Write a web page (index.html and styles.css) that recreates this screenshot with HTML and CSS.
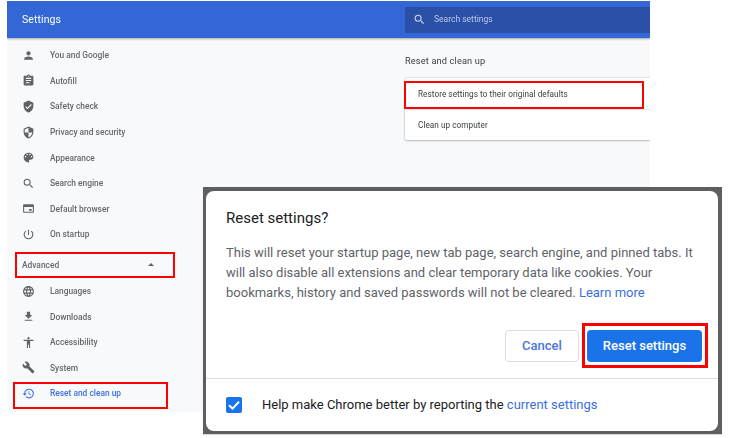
FILE: index.html
```html
<!DOCTYPE html>
<html lang="en">
<head>
<meta charset="utf-8">
<title>Reset settings</title>
<link rel="stylesheet" href="styles.css">
</head>
<body>
<div class="stage">
  <div class="app">
    <header class="topbar">
      <div class="brand">Settings</div>
      <div class="search">
        <svg class="search-icon" viewBox="0 0 24 24"><path d="M15.5 14h-.79l-.28-.27A6.47 6.47 0 0 0 16 9.5 6.5 6.5 0 1 0 9.5 16c1.61 0 3.09-.59 4.23-1.57l.27.28v.79l5 4.99L20.49 19l-4.99-5zm-6 0C7.01 14 5 11.99 5 9.5S7.01 5 9.5 5 14 7.01 14 9.5 11.99 14 9.5 14z"/></svg>
        <span>Search settings</span>
      </div>
    </header>
    <div class="content">
      <nav class="sidebar">
        <a class="item"><svg viewBox="0 0 24 24"><path d="M12 12c2.2 0 4-1.8 4-4s-1.800-4-4-4-4 1.800-4 4 1.800 4 4 4zm0 2c-2.700 0-8 1.300-8 4v2h16v-2c0-2.700-5.300-4-8-4z"/></svg><span>You and Google</span></a>
        <a class="item"><svg viewBox="0 0 24 24"><path d="M19 3h-4.180C14.400 1.840 13.300 1 12 1s-2.400.84-2.820 2H5c-1.100 0-2 .9-2 2v14c0 1.100.9 2 2 2h14c1.100 0 2-.9 2-2V5c0-1.100-.9-2-2-2zm-7 0c.55 0 1 .45 1 1s-.45 1-1 1-1-.45-1-1 .45-1 1-1zm2 14H7v-2h7v2zm3-4H7v-2h10v2zm0-4H7V7h10v2z"/></svg><span>Autofill</span></a>
        <a class="item"><svg viewBox="0 0 24 24"><path d="M12 1 3 5v6c0 5.550 3.840 10.740 9 12 5.160-1.260 9-6.450 9-12V5l-9-4zm-2 16-4-4 1.410-1.410L10 14.170l6.590-6.590L18 9l-8 8z"/></svg><span>Safety check</span></a>
        <a class="item"><svg viewBox="0 0 24 24"><path d="M12 1 3 5v6c0 5.550 3.840 10.740 9 12 5.160-1.260 9-6.450 9-12V5l-9-4zm0 10.990h7c-.53 4.120-3.280 7.790-7 8.940V12H5V6.300l7-3.110v8.800z"/></svg><span>Privacy and security</span></a>
        <a class="item"><svg viewBox="0 0 24 24"><path d="M12 3a9 9 0 0 0 0 18c.83 0 1.500-.67 1.500-1.500 0-.39-.15-.74-.39-1.010-.23-.26-.38-.61-.38-.99 0-.83.67-1.500 1.500-1.500H16c2.760 0 5-2.240 5-5 0-4.420-4.030-8-9-8zm-5.500 9a1.500 1.500 0 1 1 0-3 1.500 1.500 0 0 1 0 3zm3-4a1.500 1.500 0 1 1 0-3 1.500 1.500 0 0 1 0 3zm5 0a1.500 1.500 0 1 1 0-3 1.500 1.500 0 0 1 0 3zm3 4a1.500 1.500 0 1 1 0-3 1.500 1.500 0 0 1 0 3z"/></svg><span>Appearance</span></a>
        <a class="item"><svg viewBox="0 0 24 24"><path d="M15.500 14h-.79l-.28-.27A6.470 6.470 0 0 0 16 9.500 6.500 6.500 0 1 0 9.500 16c1.610 0 3.090-.59 4.230-1.570l.27.28v.79l5 4.990L20.490 19l-4.990-5zm-6 0C7.010 14 5 11.990 5 9.500S7.010 5 9.500 5 14 7.010 14 9.500 11.990 14 9.500 14z"/></svg><span>Search engine</span></a>
        <a class="item"><svg viewBox="0 0 24 24"><path d="M20 4H4c-1.100 0-2 .9-2 2v12c0 1.100.9 2 2 2h16c1.100 0 2-.9 2-2V6c0-1.100-.9-2-2-2zm0 14H4V9h16v9zm-2-5h-5v3h5v-3z"/></svg><span>Default browser</span></a>
        <a class="item"><svg viewBox="0 0 24 24"><path d="M13 3h-2v10h2V3zm4.830 2.170-1.420 1.420A6.920 6.920 0 0 1 19 12c0 3.870-3.130 7-7 7s-7-3.130-7-7c0-2.190 1.010-4.140 2.580-5.420L6.170 5.170A8.960 8.960 0 0 0 3 12a9 9 0 0 0 18 0c0-2.740-1.230-5.190-3.170-6.830z"/></svg><span>On startup</span></a>
        <div class="advanced"><span>Advanced</span><i class="caret"></i></div>
        <a class="item"><svg viewBox="0 0 24 24"><path d="M12 2C6.480 2 2 6.480 2 12s4.480 10 10 10 10-4.480 10-10S17.520 2 12 2zm6.930 6h-2.950a15.650 15.650 0 0 0-1.380-3.560A8.030 8.030 0 0 1 18.930 8zM12 4.040c.83 1.200 1.480 2.530 1.910 3.960h-3.820c.43-1.430 1.080-2.760 1.910-3.960zM4.260 14C4.100 13.360 4 12.690 4 12s.1-1.360.26-2h3.380c-.08.66-.14 1.320-.14 2s.06 1.340.14 2H4.260zm.82 2h2.950c.32 1.250.78 2.450 1.380 3.560A7.990 7.990 0 0 1 5.080 16zm2.950-8H5.080a7.990 7.990 0 0 1 4.330-3.560A15.650 15.650 0 0 0 8.030 8zM12 19.960c-.83-1.200-1.480-2.530-1.910-3.960h3.820c-.43 1.430-1.080 2.760-1.910 3.960zM14.340 14H9.660c-.09-.66-.16-1.320-.16-2s.07-1.350.16-2h4.680c.09.65.16 1.320.16 2s-.07 1.340-.16 2zm.25 5.560c.6-1.110 1.060-2.310 1.380-3.560h2.950a8.030 8.030 0 0 1-4.330 3.560zM16.360 14c.08-.66.14-1.320.14-2s-.06-1.340-.14-2h3.380c.16.64.26 1.310.26 2s-.1 1.360-.26 2h-3.380z"/></svg><span>Languages</span></a>
        <a class="item"><svg viewBox="0 0 24 24"><path d="M19 9h-4V3H9v6H5l7 7 7-7zM5 18v2h14v-2H5z"/></svg><span>Downloads</span></a>
        <a class="item"><svg viewBox="0 0 24 24"><path d="M12 2c1.100 0 2 .9 2 2s-.9 2-2 2-2-.9-2-2 .9-2 2-2zm9 7h-6v13h-2v-6h-2v6H9V9H3V7h18v2z"/></svg><span>Accessibility</span></a>
        <a class="item"><svg viewBox="0 0 24 24"><path d="M22.700 19l-9.100-9.100c.9-2.300.4-5-1.500-6.900-2-2-5-2.400-7.400-1.300L9 6 6 9 1.600 4.700C.4 7.100.9 10.100 2.900 12.100c1.900 1.900 4.600 2.400 6.900 1.500l9.100 9.100c.4.4 1 .4 1.400 0l2.300-2.300c.5-.4.5-1.100.1-1.400z"/></svg><span>System</span></a>
        <a class="item active"><svg viewBox="0 0 24 24"><path d="M13 3a9 9 0 0 0-9 9H1l3.890 3.890.07.14L9 12H6c0-3.870 3.130-7 7-7s7 3.130 7 7-3.130 7-7 7c-1.930 0-3.680-.79-4.940-2.060l-1.420 1.420A8.954 8.954 0 0 0 13 21a9 9 0 0 0 0-18zm-1 5v5l4.280 2.540.72-1.210-3.500-2.080V8H12z"/></svg><span>Reset and clean up</span></a>
      </nav>
      <main class="main">
        <h2 class="section-title">Reset and clean up</h2>
        <div class="card">
          <div class="row">Restore settings to their original defaults</div>
          <div class="row row-split">Clean up computer</div>
        </div>
      </main>
    </div>
  </div>

  <div class="mark mark-advanced"></div>
  <div class="mark mark-reset"></div>
  <div class="mark mark-restore"></div>

  <section class="dialog">
    <div class="dialog-inner">
      <h1 class="dialog-title">Reset settings?</h1>
      <p class="dialog-body">This will reset your startup page, new tab page, search engine, and pinned tabs. It will also disable all extensions and clear temporary data like cookies. Your bookmarks, history and saved passwords will not be cleared. <a class="link">Learn more</a></p>
      <div class="actions">
        <button class="btn btn-cancel">Cancel</button>
        <button class="btn btn-primary">Reset settings</button>
      </div>
      <div class="footer">
        <span class="check"><svg viewBox="0 0 16 16"><path d="M3 8.300 6.500 11.600 13 4.800" fill="none" stroke="#fff" stroke-width="2"/></svg></span>
        <span class="footer-text">Help make Chrome better by reporting the <a class="link">current settings</a></span>
      </div>
    </div>
    <div class="mark mark-button"></div>
  </section>
</div>
</body>
</html>
```
FILE: styles.css
```css
* { box-sizing: border-box; }
html, body { margin: 0; padding: 0; background: #fff; }
body { width: 732px; height: 438px; overflow: hidden; font-family: Roboto, "Liberation Sans", sans-serif; }
.stage { position: relative; width: 732px; height: 438px; padding: 1px 0 0 7px; }

.app { width: 643px; height: 411px; background: #f8f9fa; filter: blur(0.35px); overflow: hidden; }
.topbar { height: 37px; background: #3367d6; display: flex; align-items: center; padding-left: 15px; box-shadow: 0 1px 2px rgba(60,64,67,.45); position: relative; }
.brand { width: 383px; color: #fff; font-size: 10.5px; letter-spacing: .1px; }
.search { flex: 1; height: 26px; background: #2a50a8; border-radius: 1px 0 0 1px; display: flex; align-items: center; padding: 0 0 1px 8px; color: #b9c8ea; font-size: 8.500px; }
.search-icon { width: 13px; height: 13px; fill: #c9d5f0; margin-right: 8px; }

.content { display: flex; height: 374px; }
.sidebar { width: 398px; padding-top: 4.500px; display: flex; flex-direction: column; }
.item { display: flex; align-items: center; height: 25.600px; flex: none; padding-left: 15px; color: #64686d; font-size: 8.400px; font-weight: 500; }
.item svg { width: 13px; height: 13px; fill: #5f6368; margin-right: 15px; flex: none; }
.active, .active span { color: #3b6fe0; }
.active svg { fill: #3b6fe0; }
.advanced { height: 31px; flex: none; padding: 4px 0 0 15px; display: flex; align-items: center; color: #64686d; font-size: 8.400px; font-weight: 500; }
.advanced span { width: 126px; }
.caret { width: 0; height: 0; border-left: 3px solid transparent; border-right: 3px solid transparent; border-bottom: 3px solid #5f6368; }

.main { flex: 1; padding-top: 17px; }
.section-title { margin: 0 0 11px; font-size: 9.200px; line-height: 12px; font-weight: 400; color: #3c4043; letter-spacing: .16px; }
.card { background: #fff; height: 62px; border-radius: 2px 0 0 2px; box-shadow: 0 0 2px rgba(60,64,67,.35), 0 1px 2px rgba(60,64,67,.25); }
.row { height: 31px; padding-left: 13px; display: flex; align-items: center; font-size: 8.200px; font-weight: 400; color: #3c4043; letter-spacing: .05px; }
.row-split { border-top: 1px solid #e6e7e9; }

.mark { position: absolute; border: 2px solid #f00; }
.mark-advanced { left: 15px; top: 252px; width: 160px; height: 26px; }
.mark-reset { left: 13px; top: 382px; width: 155px; height: 27px; }
.mark-restore { left: 404px; top: 81px; width: 240px; height: 28px; }
.mark-button { left: 379px; top: 136px; width: 126px; height: 45px; border-width: 3px; }

.dialog { position: absolute; left: 203px; top: 187px; width: 519px; height: 247px; background: #5f5f5f; padding: 4px 4px 3px 3px; box-shadow: 0 1px 1px rgba(0,0,0,.15); }
.dialog-inner { height: 100%; background: #fff; border-radius: 8px; display: flex; flex-direction: column; padding-top: 17px; }
.dialog-title { margin: 0 0 0 20px; font-size: 15px; line-height: 20px; font-weight: 400; color: #202124; }
.dialog-body { margin: 15px 20px 0; font-size: 13px; line-height: 20px; color: #5f6368; height: 60px; }
.link { color: #3c6fdc; }
.actions { display: flex; justify-content: flex-end; gap: 8px; padding-right: 16px; margin-top: 27px; }
.btn { height: 32px; border-radius: 4px; font-family: inherit; font-size: 13px; font-weight: 500; padding: 0 0 2px; }
.btn-cancel { width: 74px; background: #fff; border: 1px solid #dadce0; color: #4a74e0; }
.btn-primary { width: 115px; background: #1a73e8; border: 0; color: #fff; }
.footer { margin-top: 16px; border-top: 1px solid #dcdcdc; flex: 1; display: flex; align-items: center; padding-left: 20px; }
.check { width: 16px; height: 16px; border-radius: 2px; background: #1a73e8; display: flex; margin-right: 20px; }
.check svg { width: 16px; height: 16px; }
.footer-text { font-size: 13px; color: #202124; margin-top: -1px; }
```
